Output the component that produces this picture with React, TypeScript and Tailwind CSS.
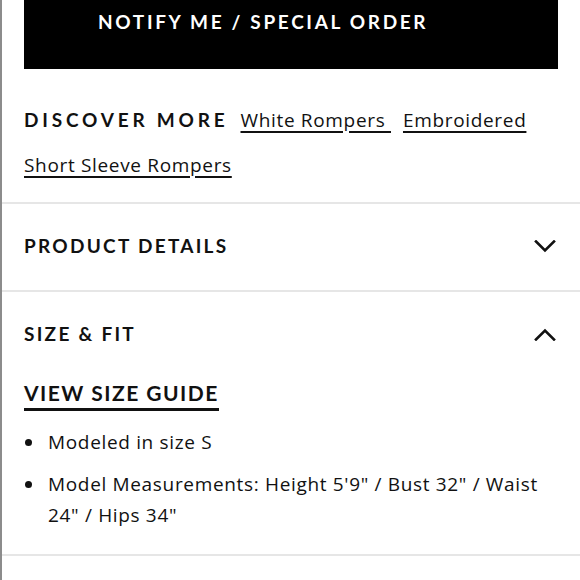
import React from 'react';

const heading = "font-['Lato',sans-serif] font-bold uppercase text-[19px] text-[#111]";
const body = "font-['Open_Sans',sans-serif] text-[19px] tracking-[0.035em] text-[#111]";
const link = `${body} underline underline-offset-[4px] decoration-[1.5px]`;

function Chevron({ up }: { up?: boolean }) {
  return (
    <svg width="22" height="13" viewBox="0 0 22 13" fill="none" className="shrink-0">
      <polyline
        points={up ? '2,11.5 11,2.5 20,11.5' : '2,1.5 11,10.5 20,1.5'}
        stroke="#111"
        strokeWidth="2.6"
        strokeLinecap="square"
        strokeLinejoin="miter"
      />
    </svg>
  );
}

function Bullet({ children }: { children: React.ReactNode }) {
  return (
    <li className={`${body} leading-[31px] flex`}>
      <span className="w-[24px] shrink-0 flex items-center h-[31px]">
        <span className="w-[7px] h-[7px] rounded-full bg-[#111] ml-[1px]" />
      </span>
      <span>{children}</span>
    </li>
  );
}

export default function App() {
  return (
    <div className="min-h-[580px] w-[580px] bg-white border-l-2 border-[#8c8c8c]">
      <div className="px-[22px]">
        <button className="w-full h-[69px] bg-black flex justify-start pl-[74px] pt-[11px]">
          <span className="font-['Lato',sans-serif] font-bold uppercase tracking-[0.14em] text-[19px] leading-[22px] text-white">
            Notify Me / Special Order
          </span>
        </button>
      </div>

      <div className="px-[22px] pt-[29px] pb-[15px]">
        <div className="flex items-baseline h-[45px] leading-[44px]">
          <span className={`${heading} tracking-[0.2em] mr-[12px]`}>Discover More</span>
          <a href="#" className={link}>
            White Rompers&nbsp;
          </a>
          <a href="#" className={`${link} ml-[12px]`}>
            Embroidered
          </a>
        </div>
        <div className="h-[44px] leading-[44px]">
          <a href="#" className={link}>
            Short Sleeve Rompers
          </a>
        </div>
      </div>

      <div className="border-t-2 border-[#e6e6e6] h-[88px] px-[22px] pr-[24px] pb-[2px] flex items-center justify-between">
        <span className={`${heading} tracking-[0.12em]`}>Product Details</span>
        <Chevron />
      </div>

      <div className="border-t-2 border-[#e6e6e6] px-[22px] pr-[24px] pb-[23px]">
        <div className="flex items-center justify-between h-[84px]">
          <span className={`${heading} tracking-[0.12em]`}>Size &amp; Fit</span>
          <Chevron up />
        </div>
        <a
          href="#"
          className="inline-block mt-[5px] font-['Lato',sans-serif] font-bold uppercase tracking-[0.07em] text-[21px] leading-[24px] text-[#111] border-b-[3px] border-[#111] pb-[3px]"
        >
          View Size Guide
        </a>
        <ul className="mt-[16px] flex flex-col gap-[11px]">
          <Bullet>Modeled in size S</Bullet>
          <Bullet>Model Measurements: Height 5'9" / Bust 32" / Waist 24" / Hips 34"</Bullet>
        </ul>
      </div>

      <div className="border-t-2 border-[#e6e6e6] h-[30px]" />
    </div>
  );
}
